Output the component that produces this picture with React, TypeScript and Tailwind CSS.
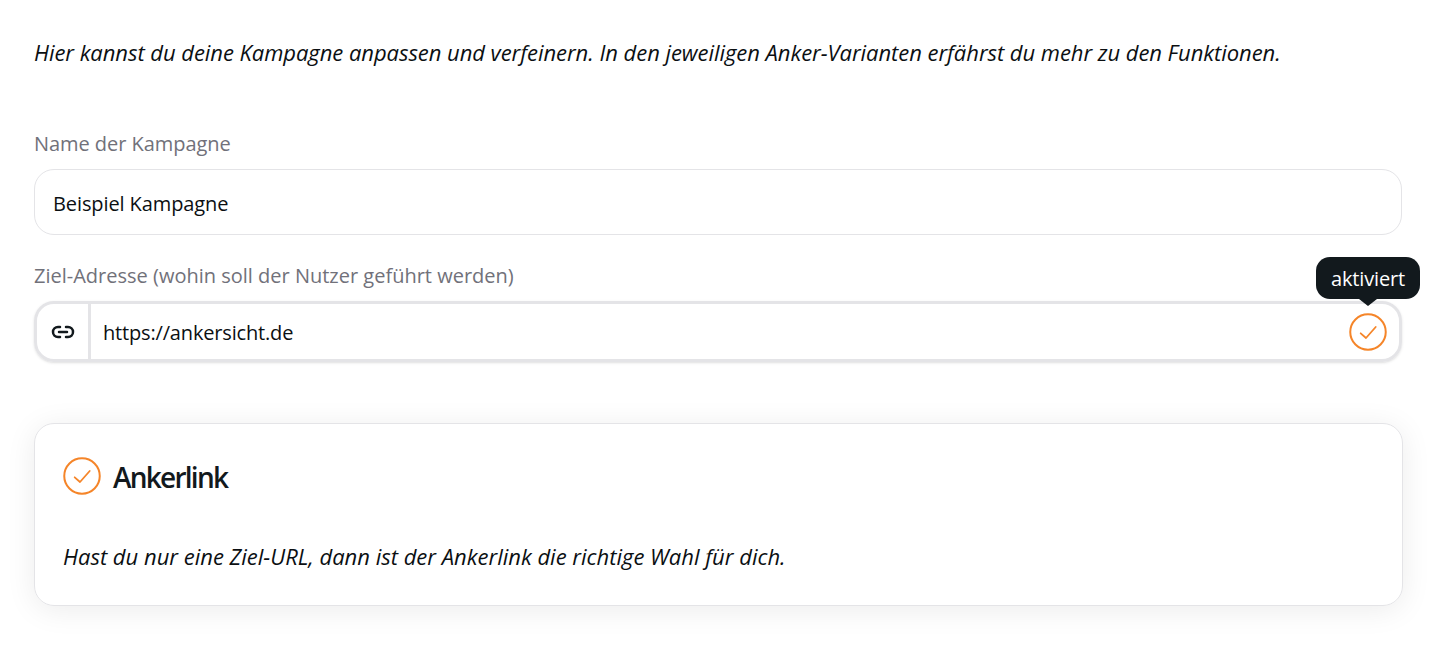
import { Link2 } from "lucide-react";

const CheckCircle = ({ className }: { className: string }) => (
  <svg viewBox="0 0 38 38" fill="none" className={className}>
    <circle cx="19" cy="19" r="17.75" stroke="#f58529" strokeWidth="2" />
    <path d="M11.7 20.3l5.3 4.7 9.7-11" stroke="#f58529" strokeWidth="1.8" strokeLinecap="round" strokeLinejoin="round" />
  </svg>
);

export default function App() {
  return (
    <div className="h-[653px] bg-white pl-[34px] pr-[50px] pt-[38px] font-['Open_Sans','Noto_Sans',sans-serif] text-[#0b0f12]">
      <p className="text-[22px] leading-[28px] italic tracking-[-0.05px]">
        Hier kannst du deine Kampagne anpassen und verfeinern. In den jeweiligen Anker-Varianten erfährst du mehr zu den Funktionen.
      </p>

      <label className="mt-[65px] block text-[20px] leading-[26px] tracking-[-0.05px] text-[#71717a]">Name der Kampagne</label>
      <div className="mt-[12px] flex h-[66px] items-center rounded-[20px] border border-[#e4e4e7] px-[18px] pt-[3px] text-[20px] tracking-[-0.1px]">
        Beispiel Kampagne
      </div>

      <label className="mt-[28px] block text-[20px] leading-[26px] text-[#71717a]">
        Ziel-Adresse (wohin soll der Nutzer geführt werden)
      </label>
      <div className="relative mt-[12px] flex h-[61px] items-center rounded-[20px] border-[3px] border-[#e4e4e7] shadow-sm">
        <div className="flex h-full w-[54px] shrink-0 items-center justify-center border-r-[3px] border-[#e4e4e7]">
          <Link2 className="h-[24px] w-[24px] text-[#12191d]" strokeWidth={2.5} />
        </div>
        <span className="flex-1 pl-[12px] pt-[2px] text-[20px] tracking-[-0.17px]">https://ankersicht.de</span>
        <CheckCircle className="mr-[12px] h-[38px] w-[38px]" />
        <div className="absolute -right-[21px] -top-[47px] rounded-[14px] bg-[#12191d] px-[15px] pb-[6px] pt-[8px] text-[20px] leading-[28px] tracking-[-0.15px] text-white">
          aktiviert
          <span className="absolute left-1/2 top-full h-0 w-0 -translate-x-1/2 border-x-[9px] border-t-[7px] border-x-transparent border-t-[#12191d]" />
        </div>
      </div>

      <div className="-mr-px mt-[61px] h-[183px] rounded-[20px] border border-[#e4e4e7] pl-[28px] pr-[29px] pt-[33px] shadow-[0_4px_30px_rgba(0,0,0,0.08)]">
        <div className="flex items-center gap-[12px]">
          <CheckCircle className="h-[38px] w-[38px]" />
          <h2 className="pt-[2px] text-[28px] font-semibold leading-[36px] tracking-[-1.75px] text-[#12191d]">Ankerlink</h2>
        </div>
        <p className="mt-[47px] text-[22px] leading-[28px] italic">
          Hast du nur eine Ziel-URL, dann ist der Ankerlink die richtige Wahl für dich.
        </p>
      </div>
    </div>
  );
}
